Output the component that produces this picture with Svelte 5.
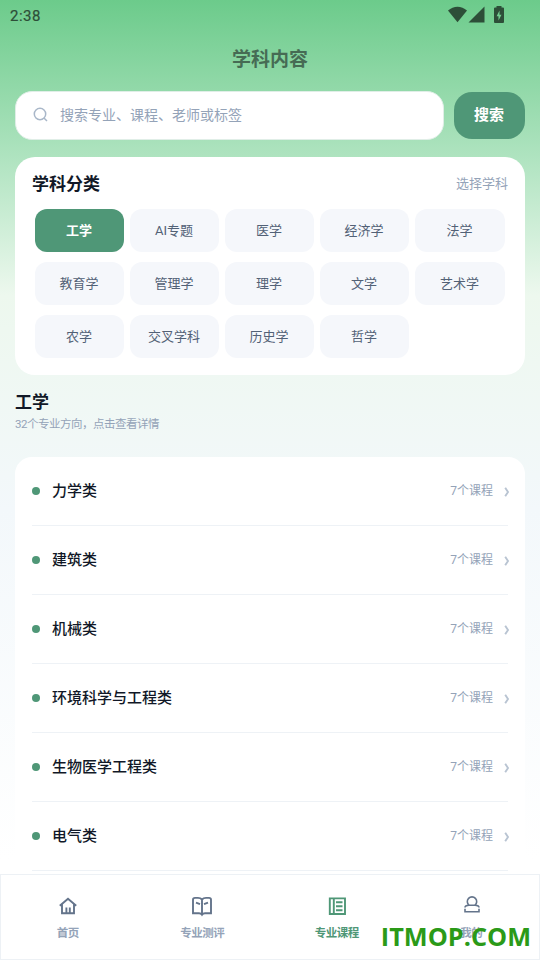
<script>
  const subjects = [
    '工学', 'AI专题', '医学', '经济学', '法学',
    '教育学', '管理学', '理学', '文学', '艺术学',
    '农学', '交叉学科', '历史学', '哲学'
  ];

  const majors = ['力学类', '建筑类', '机械类', '环境科学与工程类', '生物医学工程类', '电气类'];

  const tabs = [
    { id: 'home', label: '首页' },
    { id: 'test', label: '专业测评' },
    { id: 'course', label: '专业课程' },
    { id: 'mine', label: '我的' }
  ];

  let subject = '工学';
  let tab = 'course';
  let keyword = '';
</script>

<div class="page">
  <div class="status">
    <span class="time">2:38</span>
    <svg class="signals" width="58" height="18" viewBox="0 0 58 18">
      <path d="M0 4.6C5.5 -0.5 13.5 -0.5 19 4.6L9.5 16.3z" />
      <path d="M36.5 0.5V16.5H20.5z" />
      <path
        fill-rule="evenodd"
        d="M48.5 0H53.5V1.6H55Q56 1.6 56 2.6V16Q56 17 55 17H47Q46 17 46 16V2.6Q46 1.6 47 1.6H48.5zM51.5 4.5L48.6 10.2H50.5V14.5L53.5 8.8H51.5z"
      />
    </svg>
  </div>

  <h1>学科内容</h1>

  <div class="search">
    <label class="search-box">
      <svg width="16" height="16" viewBox="0 0 16 16">
        <circle cx="7" cy="7" r="5.7" />
        <path d="M11 11L14 14" />
      </svg>
      <input bind:value={keyword} placeholder="搜索专业、课程、老师或标签" />
    </label>
    <button class="search-btn">搜索</button>
  </div>

  <section class="card">
    <div class="card-head">
      <h2>学科分类</h2>
      <span>选择学科</span>
    </div>
    <div class="subjects">
      {#each subjects as name}
        <button class:active={subject === name} on:click={() => (subject = name)}>{name}</button>
      {/each}
    </div>
  </section>

  <div class="section-head">
    <h2>{subject}</h2>
    <p>32个专业方向，点击查看详情</p>
  </div>

  <ul class="majors">
    {#each majors as major}
      <li>
        <i class="dot"></i>
        <span class="name">{major}</span>
        <span class="count">7个课程</span>
        <svg class="arrow" width="6" height="10" viewBox="0 0 6 10">
          <path d="M1.2 0.8L4 5L1.2 9.2" />
        </svg>
      </li>
    {/each}
  </ul>

  <nav>
    {#each tabs as item}
      <button class:active={tab === item.id} on:click={() => (tab = item.id)}>
        <svg width="22" height="22" viewBox="0 0 22 22">
          {#if item.id === 'home'}
            <path d="M2.8 10.8L11 3.7L19.2 10.8M5 9.5V18.2H17V9.5M9.4 18V12.5M12.8 18V12.5" />
          {:else if item.id === 'test'}
            <path d="M11 4.5Q9.5 2.9 7 2.9H4Q2 2.9 2 4.8V18.2H8Q10 18.2 11 19.7Q12 18.2 14 18.2H20V4.8Q20 2.9 18 2.9H15Q12.5 2.9 11 4.5zM11 4.5V19.5M5 7.6L9 9.2M17 7.6L13 9.2" />
          {:else if item.id === 'course'}
            <path d="M3.8 3.4H19V19H3.8zM7.8 3.4V19M10 7.2H16.5M10 11.2H16.5M10 15.2H16.5" />
          {:else}
            <path class="thin" d="M9 10.2A4.7 4.7 0 1 1 15 10.2M9 10.2H15M9 10.2Q5 10.2 5 12.6M15 10.2Q19 10.2 19 12.6M5 13.8V16.7H19V13.8" />
          {/if}
        </svg>
        <span>{item.label}</span>
      </button>
    {/each}
  </nav>

  <div class="watermark">ITMOP.COM</div>
</div>

<style>
  :global(body) {
    background: #fff;
  }

  .page {
    position: relative;
    box-sizing: border-box;
    width: 540px;
    height: 960px;
    overflow: hidden;
    display: flex;
    flex-direction: column;
    font-family: Roboto, 'Noto Sans CJK SC', sans-serif;
    background: linear-gradient(180deg, #6ccb8b 0, #aee3bf 155px, #edf8ee 295px, #f3f8fb 510px, #fff 860px);
  }

  h1,
  h2,
  p,
  ul {
    margin: 0;
    padding: 0;
  }

  button {
    font-family: inherit;
    line-height: 20px;
    border: none;
    padding: 0;
    cursor: pointer;
  }

  .status {
    flex: none;
    height: 32px;
    padding: 0 34px 0 10px;
    display: flex;
    justify-content: space-between;
    align-items: center;
    color: #2d4e38;
  }

  .time {
    font-size: 15px;
    line-height: 32px;
    letter-spacing: 0.5px;
    -webkit-text-stroke: 0.2px #2d4e38;
  }

  .signals {
    fill: #2d4e38;
    margin-bottom: 3px;
  }

  h1 {
    flex: none;
    height: 59px;
    line-height: 56px;
    text-align: center;
    font-size: 19px;
    font-weight: 600;
    color: #466b54;
  }

  .search {
    flex: none;
    display: flex;
    align-items: center;
    gap: 10px;
    padding: 0 15px;
  }

  .search-box {
    box-sizing: border-box;
    flex: 1;
    height: 49px;
    display: flex;
    align-items: center;
    gap: 11px;
    padding: 0 17px;
    background: #fff;
    border: 1px solid #e0eee7;
    border-radius: 17px;
  }

  .search-box svg {
    fill: none;
    stroke: #a9b7c9;
    stroke-width: 1.5;
    margin-bottom: 1px;
  }

  input {
    flex: 1;
    min-width: 0;
    height: 20px;
    border: none;
    outline: none;
    padding: 0;
    margin-bottom: 2px;
    background: none;
    font-family: inherit;
    font-size: 14px;
    line-height: 20px;
  }

  input::placeholder {
    color: #94a3b8;
  }

  .search-btn {
    width: 71px;
    height: 47px;
    padding: 0 1px 1px 0;
    border-radius: 18px;
    background: #4f9777;
    color: #fff;
    font-size: 15px;
    font-weight: 700;
  }

  .card {
    box-sizing: border-box;
    flex: none;
    height: 218px;
    margin: 17px 15px 0;
    padding: 14px 17px 0;
    background: #fff;
    border-radius: 20px;
  }

  .card-head {
    height: 38px;
    display: flex;
    justify-content: space-between;
    align-items: flex-start;
  }

  h2 {
    font-size: 17px;
    line-height: 26px;
    font-weight: 600;
    color: #111827;
  }

  .card-head span {
    font-size: 13px;
    line-height: 26px;
    color: #94a3b8;
  }

  .subjects {
    display: grid;
    grid-template-columns: repeat(4, 89px) 1fr;
    gap: 10px 6px;
    padding: 0 3px;
  }

  .subjects button {
    height: 43px;
    padding-right: 1px;
    border-radius: 12px;
    background: #f5f7fb;
    color: #526176;
    font-size: 13px;
  }

  .subjects button.active {
    background: #4f9777;
    color: #fff;
    font-weight: 700;
  }

  .section-head {
    flex: none;
    height: 82px;
    box-sizing: border-box;
    padding: 14px 15px 0;
  }

  .section-head p {
    font-size: 11.5px;
    line-height: 19px;
    letter-spacing: -0.5px;
    color: #94a3b8;
  }

  .majors {
    flex: 1;
    min-height: 0;
    overflow: hidden;
    list-style: none;
    margin: 0 15px;
    padding: 0 17px;
    background: #fff;
    border-radius: 17px 17px 0 0;
  }

  .majors li {
    box-sizing: border-box;
    height: 69px;
    display: flex;
    align-items: center;
    line-height: 20px;
    border-bottom: 1px solid #eef2f6;
  }

  .dot {
    width: 8px;
    height: 8px;
    border-radius: 50%;
    background: #4f9777;
    margin-right: 12px;
  }

  .name {
    flex: 1;
    font-size: 15px;
    font-weight: 500;
    color: #111827;
  }

  .count {
    font-size: 12px;
    color: #94a3b8;
    margin-right: 11px;
  }

  .arrow {
    margin: 2px -2px 0 0;
    fill: none;
    stroke: #b9c4d2;
    stroke-width: 1.9;
  }

  nav {
    box-sizing: border-box;
    flex: none;
    height: 86px;
    display: flex;
    background: #fff;
    border: 1px solid #edf1f5;
  }

  nav button {
    flex: 1;
    background: none;
    display: flex;
    flex-direction: column;
    align-items: center;
    padding-top: 20px;
    color: #64748b;
  }

  nav svg {
    fill: none;
    stroke: currentColor;
    stroke-width: 1.9;
    margin-left: -1px;
  }

  nav .thin {
    stroke-width: 1.6;
  }

  nav span {
    font-size: 11.5px;
    line-height: 18px;
    font-weight: 600;
    letter-spacing: -0.5px;
    margin: 7px 0 0 -1px;
    color: #94a3b8;
  }

  nav button.active,
  nav .active span {
    color: #4f9777;
  }

  .watermark {
    position: absolute;
    right: 9px;
    bottom: 7px;
    font: 700 25.3px/34px 'Open Sans', sans-serif;
    color: #2b9a18;
  }
</style>
